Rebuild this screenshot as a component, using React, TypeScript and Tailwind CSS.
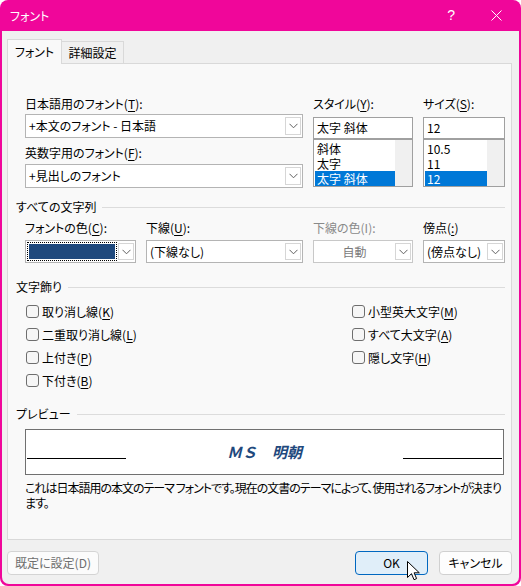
import React from "react";

const Chevron = ({ color = "#606060" }: { color?: string }) => (
  <svg width="9" height="6" viewBox="0 0 9 6">
    <path d="M0.5 0.8 L4.5 4.8 L8.5 0.8" fill="none" stroke={color} strokeWidth="1" />
  </svg>
);

function DropBtn() {
  return (
    <div className="w-[16px] my-[2px] mr-[1px] border border-[#d6d6d6] bg-white flex items-center justify-center shrink-0">
      <Chevron />
    </div>
  );
}

function Combo({ text, h = "h-[24px]" }: { text: string; h?: string }) {
  return (
    <div className={`${h} border border-[#b4b4b4] bg-white flex`}>
      <div className="flex-1 flex items-center pl-[3px] whitespace-nowrap">{text}</div>
      <DropBtn />
    </div>
  );
}

function U({ c }: { c: string }) {
  return <span className="underline underline-offset-2">{c}</span>;
}

function Section({ title, className = "" }: { title: string; className?: string }) {
  return (
    <div className={`flex items-center h-[16px] ${className}`}>
      <span className="leading-[16px]">{title}</span>
      <div className="flex-1 h-px bg-[#dcdcdc] ml-[6px]" />
    </div>
  );
}

function ListBox({ items }: { items: string[] }) {
  return (
    <div className="h-[48px] border border-[#a0a0a0] bg-white flex">
      <div className="flex-1 pt-px pl-px">
        {items.map((t, i) => (
          <div
            key={t}
            className={`h-[15px] leading-[15px] pl-[2px] whitespace-nowrap ${
              i === items.length - 1 ? "bg-[#0078d7] text-white" : ""
            }`}
          >
            {t}
          </div>
        ))}
      </div>
      <div className="w-[17px] bg-[#f0f0f0]" />
    </div>
  );
}

function Check({ children }: { children: React.ReactNode }) {
  return (
    <div className="h-[23px] flex items-center">
      <div className="w-[13px] h-[13px] ml-px mr-[3px] rounded-[3px] border border-[#6e6e6e] bg-[#f6f6f6]" />
      <span className="leading-[16px]">{children}</span>
    </div>
  );
}

export default function App() {
  return (
    <div className="relative w-[521px] h-[586px] bg-[#f0069a] rounded-[8px] flex flex-col overflow-hidden text-[12px] text-black font-['Noto_Sans_CJK_JP','Noto_Sans',sans-serif] [font-feature-settings:'palt']">
      {/* title bar */}
      <div className="h-[31px] flex items-center pl-[10px] text-white shrink-0">
        <span className="leading-[16px]">フォント</span>
        <span className="ml-auto mr-[36px] text-[14px] font-['Liberation_Sans',sans-serif]">?</span>
        <svg width="11" height="11" viewBox="0 0 11 11" className="mr-[19px]">
          <path d="M0.5 0.5 L10.5 10.5 M10.5 0.5 L0.5 10.5" stroke="white" strokeWidth="1" />
        </svg>
      </div>

      <div className="flex-1 mx-[2px] mb-[2px] bg-[#f0f0f0] rounded-b-[7px] pt-[8px] flex flex-col">
        {/* tabs */}
        <div className="ml-[5px] flex items-end h-[24px]">
          <div className="relative z-10 w-[55px] h-[25px] -mb-px bg-[#f9f9f9] border border-b-0 border-[#d9d9d9] flex items-center justify-center">
            フォント
          </div>
          <div className="w-[62px] h-[22px] border border-l-0 border-b-0 border-[#d9d9d9] bg-[#f0f0f0] flex items-center justify-center">
            詳細設定
          </div>
        </div>

        {/* panel */}
        <div className="ml-[5px] mr-[7px] h-[477px] border border-[#d9d9d9] bg-[#f9f9f9] pl-[8px] pr-[6px] pt-[32px]">
          <div className="ml-[9px] flex gap-[10px]">
            <div className="w-[278px]">
              <div className="h-[16px] leading-[16px]">
                日本語用のフォント(<U c="T" />):
              </div>
              <div className="mt-[2px]">
                <Combo text="+本文のフォント - 日本語" />
              </div>
              <div className="mt-[7px] h-[16px] leading-[16px]">
                英数字用のフォント(<U c="F" />):
              </div>
              <div className="mt-[3px]">
                <Combo text="+見出しのフォント" />
              </div>
            </div>
            <div className="w-[100px]">
              <div className="h-[16px] leading-[16px]">
                スタイル(<U c="Y" />):
              </div>
              <div className="mt-[5px] h-[22px] border border-[#a0a0a0] bg-white flex items-center pl-[3px]">
                太字 斜体
              </div>
              <ListBox items={["斜体", "太字", "太字 斜体"]} />
            </div>
            <div className="w-[82px]">
              <div className="h-[16px] leading-[16px]">
                サイズ(<U c="S" />):
              </div>
              <div className="mt-[5px] h-[22px] border border-[#a0a0a0] bg-white flex items-center pl-[3px]">
                12
              </div>
              <ListBox items={["10.5", "11", "12"]} />
            </div>
          </div>

          <Section title="すべての文字列" className="mt-[11px]" />

          <div className="ml-[9px] mt-[5px] flex gap-[10px]">
            <div className="w-[111px]">
              <div className="h-[16px] leading-[16px]">
                フォントの色(<U c="C" />):
              </div>
              <div className="mt-[4px] h-[23px] border border-[#b4b4b4] bg-white flex">
                <div className="flex-1 p-px">
                  <div className="h-full border border-dotted border-black p-px">
                    <div className="h-full bg-[#1f497d]" />
                  </div>
                </div>
                <DropBtn />
              </div>
            </div>
            <div className="w-[157px]">
              <div className="h-[16px] leading-[16px]">
                下線(<U c="U" />):
              </div>
              <div className="mt-[4px]">
                <Combo text="(下線なし)" h="h-[23px]" />
              </div>
            </div>
            <div className="w-[100px]">
              <div className="h-[16px] leading-[16px] text-[#8a8a8a]">下線の色(I):</div>
              <div className="mt-[4px] h-[23px] border border-[#c8c8c8] bg-white flex">
                <div className="flex-1 flex items-center justify-center text-[#7a7a7a]">自動</div>
                <DropBtn />
              </div>
            </div>
            <div className="w-[82px]">
              <div className="h-[16px] leading-[16px]">
                傍点(<U c=":" />)
              </div>
              <div className="mt-[4px]">
                <Combo text="(傍点なし)" h="h-[23px]" />
              </div>
            </div>
          </div>

          <Section title="文字飾り" className="mt-[16px]" />

          <div className="ml-[9px] mt-[5px] flex">
            <div className="w-[326px]">
              <Check>
                取り消し線(<U c="K" />)
              </Check>
              <Check>
                二重取り消し線(<U c="L" />)
              </Check>
              <Check>
                上付き(<U c="P" />)
              </Check>
              <Check>
                下付き(<U c="B" />)
              </Check>
            </div>
            <div>
              <Check>
                小型英大文字(<U c="M" />)
              </Check>
              <Check>
                すべて大文字(<U c="A" />)
              </Check>
              <Check>
                隠し文字(<U c="H" />)
              </Check>
            </div>
          </div>

          <Section title="プレビュー" className="mt-[14px]" />

          <div className="ml-[9px] mt-[7px] w-[479px] h-[46px] border border-[#707070] bg-white flex px-px">
            <div className="w-[99px] h-px bg-black self-end mb-[15px]" />
            <div className="flex-1 self-center text-center text-[15px] leading-[20px] font-bold italic text-[#1f497d] [font-feature-settings:normal]">
              ＭＳ　明朝
            </div>
            <div className="w-[99px] h-px bg-black self-end mb-[15px]" />
          </div>

          <div className="ml-[9px] mt-[5px] leading-[15px] tracking-[-1px]">
            <div className="whitespace-nowrap">
              これは日本語用の本文のテーマ フォントです。現在の文書のテーマによって、使用されるフォントが決まり
            </div>
            <div>ます。</div>
          </div>
        </div>

        {/* buttons */}
        <div className="mt-[11px] flex pl-[5px] pr-[7px]">
          <div className="w-[92px] h-[24px] rounded-[4px] border border-[#d4d4d4] bg-[#fbfbfb] text-[#6e6e6e] flex items-center justify-center">
            既定に設定(D)
          </div>
          <div className="ml-auto w-[73px] h-[24px] rounded-[4px] border border-[#0067c0] bg-[#e0eef9] flex items-center justify-center">
            OK
          </div>
          <div className="ml-[11px] w-[73px] h-[24px] rounded-[4px] border border-[#d0d0d0] bg-[#fdfdfd] flex items-center justify-center">
            キャンセル
          </div>
        </div>
      </div>

      {/* mouse cursor */}
      <svg width="13" height="20" viewBox="0 0 13 20" className="absolute left-[407px] top-[561px]">
        <path
          d="M0.5 0.5 L0.5 16.5 L4.5 12.7 L7 18.7 L9.6 17.6 L7.1 11.8 L12.3 11.8 Z"
          fill="white"
          stroke="black"
          strokeWidth="1"
          strokeLinejoin="round"
        />
      </svg>
    </div>
  );
}
